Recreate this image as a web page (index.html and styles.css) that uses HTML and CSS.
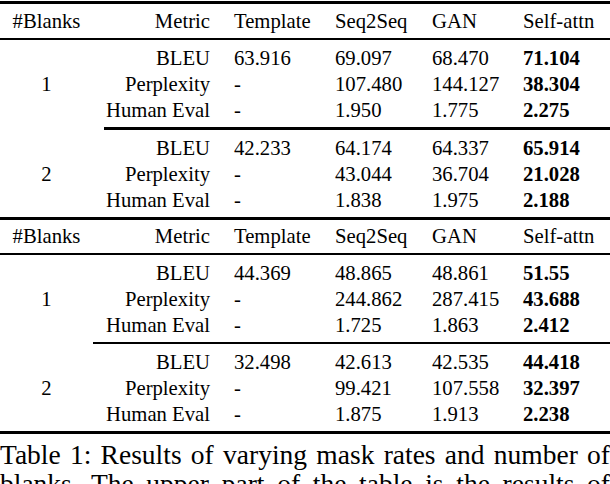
FILE: index.html
```html
<!DOCTYPE html>
<html>
<head>
<meta charset="utf-8">
<link rel="stylesheet" href="styles.css">
</head>
<body>
<div class="page">
  <div class="tbl">
    <div class="rule heavy top"></div>
    <div class="row head">
      <div class="c1">#Blanks</div><div class="c2">Metric</div><div class="cv">Template</div><div class="cv">Seq2Seq</div><div class="cv">GAN</div><div class="cv">Self-attn</div>
    </div>
    <div class="rule mid"></div>
    <div class="row group">
      <div class="c1 span">1</div>
      <div class="c2">BLEU</div><div class="cv">63.916</div><div class="cv">69.097</div><div class="cv">68.470</div><div class="cv b">71.104</div>
      <div class="c2">Perplexity</div><div class="cv">-</div><div class="cv">107.480</div><div class="cv">144.127</div><div class="cv b">38.304</div>
      <div class="c2">Human Eval</div><div class="cv">-</div><div class="cv">1.950</div><div class="cv">1.775</div><div class="cv b">2.275</div>
    </div>
    <div class="rule cmid cmid-a"></div>
    <div class="row group">
      <div class="c1 span">2</div>
      <div class="c2">BLEU</div><div class="cv">42.233</div><div class="cv">64.174</div><div class="cv">64.337</div><div class="cv b">65.914</div>
      <div class="c2">Perplexity</div><div class="cv">-</div><div class="cv">43.044</div><div class="cv">36.704</div><div class="cv b">21.028</div>
      <div class="c2">Human Eval</div><div class="cv">-</div><div class="cv">1.838</div><div class="cv">1.975</div><div class="cv b">2.188</div>
    </div>
    <div class="rule heavy"></div>
  </div>
  <div class="tbl">
    <div class="row head head-b">
      <div class="c1">#Blanks</div><div class="c2">Metric</div><div class="cv">Template</div><div class="cv">Seq2Seq</div><div class="cv">GAN</div><div class="cv">Self-attn</div>
    </div>
    <div class="rule mid"></div>
    <div class="row group">
      <div class="c1 span">1</div>
      <div class="c2">BLEU</div><div class="cv">44.369</div><div class="cv">48.865</div><div class="cv">48.861</div><div class="cv b">51.55</div>
      <div class="c2">Perplexity</div><div class="cv">-</div><div class="cv">244.862</div><div class="cv">287.415</div><div class="cv b">43.688</div>
      <div class="c2">Human Eval</div><div class="cv">-</div><div class="cv">1.725</div><div class="cv">1.863</div><div class="cv b">2.412</div>
    </div>
    <div class="rule cmid cmid-b"></div>
    <div class="row group">
      <div class="c1 span">2</div>
      <div class="c2">BLEU</div><div class="cv">32.498</div><div class="cv">42.613</div><div class="cv">42.535</div><div class="cv b">44.418</div>
      <div class="c2">Perplexity</div><div class="cv">-</div><div class="cv">99.421</div><div class="cv">107.558</div><div class="cv b">32.397</div>
      <div class="c2">Human Eval</div><div class="cv">-</div><div class="cv">1.875</div><div class="cv">1.913</div><div class="cv b">2.238</div>
    </div>
    <div class="rule heavy"></div>
  </div>
  <p class="caption">Table 1: Results of varying mask rates and number of blanks. The upper part of the table is the results of different mask rates, and the lower part is the results of different numbers of blanks.</p>
</div>
</body>
</html>
```

FILE: styles.css
```css
html, body {
  margin: 0;
  padding: 0;
  background: #ffffff;
  overflow: hidden;
  height: 484px;
}
body {
  font-family: "Liberation Serif", "Times New Roman", serif;
  color: #000;
}
.page {
  width: 610px;
  padding-top: 1px;
}
.tbl {
  display: flex;
  flex-direction: column;
}
.rule {
  background: #000;
}
.rule.heavy { height: 3px; }
.rule.mid { height: 2px; }
.rule.cmid { height: 2.5px; }
.cmid-a { margin-left: 104px; }
.cmid-b { margin-left: 93px; }
.row {
  display: grid;
  grid-template-columns: 93px 117px 101px 97px 91px 1fr;
  font-size: 20.7px;
  white-space: nowrap;
}
.head {
  height: 34px;
  align-items: center;
  line-height: 24px;
}
.head-b { height: 33px; }
.group {
  grid-template-rows: repeat(3, 26px);
  line-height: 26px;
  padding: 5px 0 4px;
}
.c1 { text-align: center; }
.span {
  grid-row: 1 / 4;
  align-self: center;
}
.c2 { text-align: right; }
.cv { padding-left: 24px; }
.b { font-weight: bold; }
.caption {
  margin: 7px 0 0;
  font-size: 27.5px;
  line-height: 28.5px;
  text-align: justify;
}
```
